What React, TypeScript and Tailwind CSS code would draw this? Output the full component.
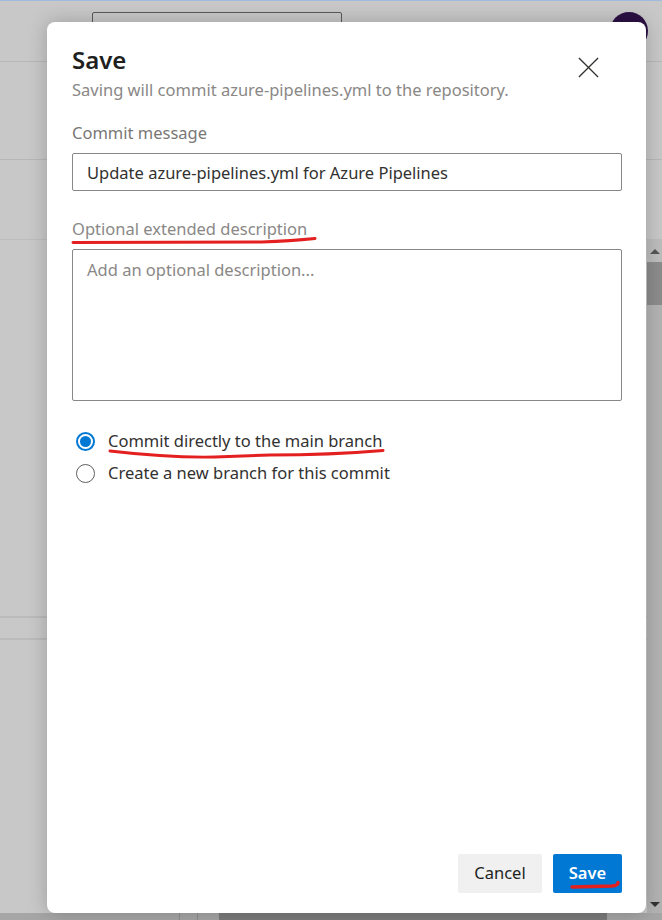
import React, { useState } from 'react';

const font = { fontFamily: '"Segoe UI", "Noto Sans", "Open Sans", sans-serif' };

const RadioOption: React.FC<{
  label: string;
  checked: boolean;
  onSelect: () => void;
}> = ({ label, checked, onSelect }) => (
  <button type="button" onClick={onSelect} className="flex h-[32px] items-center gap-[13px] pl-[4px] text-left">
    {checked ? (
      <span className="flex h-[19px] w-[19px] items-center justify-center rounded-full border-[2px] border-[#0078d4]">
        <span className="h-[11px] w-[11px] rounded-full bg-[#0078d4]" />
      </span>
    ) : (
      <span className="h-[19px] w-[19px] rounded-full border border-[#605e5c]" />
    )}
    <span className="text-[16.5px] text-[#323130]">{label}</span>
  </button>
);

const SaveDialog: React.FC = () => {
  const [message, setMessage] = useState('Update azure-pipelines.yml for Azure Pipelines');
  const [description, setDescription] = useState('');
  const [target, setTarget] = useState<'main' | 'branch'>('main');

  return (
    <div
      className="absolute left-[47px] top-[22px] flex h-[891px] w-[599px] flex-col rounded-[8px] bg-white pb-[20px] pl-[25px] pr-[24px] pt-[22px] shadow-[0_0_20px_rgba(0,0,0,0.22)]"
      style={font}
    >
      <div className="flex items-start justify-between">
        <div>
          <h1 className="text-[24px] font-semibold leading-[32px] text-[#201f1e]">Save</h1>
          <p className="mt-[4px] text-[16.5px] leading-[20px] text-[#8a8886]">
            Saving will commit azure-pipelines.yml to the repository.
          </p>
        </div>
        <button type="button" className="mr-[20px] mt-[9px] flex h-[28px] w-[28px] items-center justify-center text-[#323130]">
          <svg width="21" height="21" viewBox="0 0 22 22" fill="none" stroke="currentColor" strokeWidth="1.4">
            <path d="M1 1 L21 21 M21 1 L1 21" />
          </svg>
        </button>
      </div>

      <label className="mt-[23px] text-[16.5px] leading-[20px] text-[#797775]">Commit message</label>
      <input
        value={message}
        onChange={(e) => setMessage(e.target.value)}
        className="mt-[10px] h-[38px] w-full rounded-[2px] border border-[#8a8886] px-[14px] text-[16.5px] text-[#323130] outline-none"
      />

      <label className="mt-[28px] text-[16.5px] leading-[20px] text-[#8a8886]">Optional extended description</label>
      <textarea
        value={description}
        onChange={(e) => setDescription(e.target.value)}
        placeholder="Add an optional description..."
        className="mt-[10px] h-[152px] w-full resize-none rounded-[2px] border border-[#8a8886] px-[14px] py-[9px] text-[16.5px] leading-[22px] text-[#323130] outline-none placeholder:text-[#8a8886]"
      />

      <div className="mt-[24px] flex flex-col">
        <RadioOption label="Commit directly to the main branch" checked={target === 'main'} onSelect={() => setTarget('main')} />
        <RadioOption label="Create a new branch for this commit" checked={target === 'branch'} onSelect={() => setTarget('branch')} />
      </div>

      <div className="mt-auto flex justify-end gap-[11px]">
        <button type="button" className="h-[39px] w-[84px] rounded-[2px] bg-[#f0f0f0] text-[16.5px] text-[#201f1e]">
          Cancel
        </button>
        <button type="button" className="h-[39px] w-[69px] rounded-[2px] bg-[#0078d4] text-[16.5px] font-semibold text-white">
          Save
        </button>
      </div>

      {/* hand-drawn red marks over the screenshot */}
      <svg className="pointer-events-none absolute left-0 top-0" width="599" height="891" viewBox="47 22 599 891" fill="none">
        <g stroke="#e3201f" strokeWidth="3" strokeLinecap="round">
          <path d="M73 242.5 L262 242 Q290 241 315 238.5" />
          <path d="M110 451 Q170 458 215 457 Q245 456 270 455 Q330 455 383 450.5" />
          <path d="M572 887 L612 886 Q618 885.5 618 882.5" strokeWidth="3.5" />
        </g>
      </svg>
    </div>
  );
};

export default function App() {
  return (
    <div className="relative flex h-[920px] w-full flex-col overflow-hidden bg-[#c8c8c8]" style={font}>
      <div className="h-[1px] bg-[#9fbbe0]" />
      <div className="flex h-[61px] items-start border-b border-[#b7b7b7] pt-[11px]">
        <div className="ml-[92px] h-[34px] w-[250px] rounded-[2px] border border-[#5a5a5a]" />
        <div className="ml-auto mr-[14px] h-[38px] w-[38px] rounded-full bg-[#2b1044]" />
      </div>
      <div className="h-[98px] border-b border-[#b7b7b7]" />
      <div className="h-[80px] border-b border-[#bdbdbd]" />
      <div className="flex flex-1">
        <div className="flex flex-1 flex-col">
          <div className="h-[378px] border-b-2 border-[#bbbbbb]" />
          <div className="h-[22px] border-b-2 border-[#bbbbbb]" />
          <div className="flex-1" />
        </div>
        <div className="flex w-[15px] flex-col bg-[#b3b3b3]">
          <div className="flex h-[22px] items-center justify-center bg-[#bdbdbd]">
            <span className="h-0 w-0 border-x-[5px] border-b-[5px] border-x-transparent border-b-[#555]" />
          </div>
          <div className="h-[43px] bg-[#8c8c8c]" />
          <div className="flex-1" />
          <div className="flex h-[18px] items-center justify-center">
            <span className="h-0 w-0 border-x-[5px] border-t-[5px] border-x-transparent border-t-[#333]" />
          </div>
        </div>
      </div>
      <div className="flex h-[7px] bg-[#a6a6a6]">
        <div className="w-[180px] border-r border-[#8f8f8f]" />
        <div className="w-[18px] border-r border-[#8f8f8f]" />
        <div className="ml-[21px] w-[388px] bg-[#7b7b7b]" />
      </div>
      <SaveDialog />
    </div>
  );
}
